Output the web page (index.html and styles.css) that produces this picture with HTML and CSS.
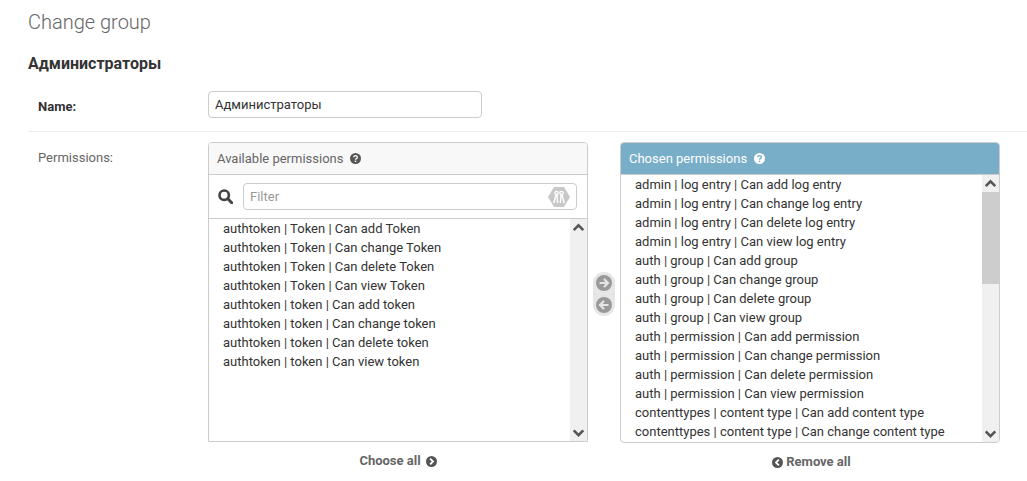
FILE: index.html
```html
<!DOCTYPE html>
<html lang="en">
<head>
    <meta charset="UTF-8">
    <title>Change group</title>
    <link rel="stylesheet" href="styles.css">
</head>
<body>
<div class="content">
    <h1>Change group</h1>
    <h2>Администраторы</h2>
    <!--name-->
    <div class="form-row name-row">
        <label class="required">Name:</label>
        <input class="text-input" type="text" value="Администраторы">
    </div>
    <!--permissions-->
    <div class="form-row perm-row">
        <label>Permissions:</label>
        <div class="selector">
            <div class="selector-side">
                <div class="box">
                    <div class="box-title">
                        Available permissions
                        <svg class="help" viewBox="0 0 16 16"><circle cx="8" cy="8" r="8" fill="currentColor"/><path d="M5.400 6.200a2.600 2.400 0 1 1 3.900 2.100c-.9.5-1.300.9-1.300 1.600" fill="none" stroke="#f8f8f8" stroke-width="2"/><rect x="6.900" y="11" width="2.200" height="2.200" fill="#f8f8f8"/></svg>
                    </div>
                    <div class="filter">
                        <svg class="search" viewBox="0 0 16 16"><circle cx="6.600" cy="6.600" r="5" fill="none" stroke="#444" stroke-width="2.800"/><path d="M10.400 10.400l4.200 4.200" stroke="#444" stroke-width="3.200" stroke-linecap="round"/></svg>
                        <div class="filter-input">
                            <span>Filter</span>
                            <svg class="keys" viewBox="0 0 22 20"><path d="M6 0h10l6 10-6 10H6L0 10z" fill="#c8c8c8"/><g fill="none" stroke="#fff" stroke-width="1.400"><circle cx="8.500" cy="6" r="1.600"/><circle cx="13.500" cy="6" r="1.600"/><path d="M8 8L5.800 16M9 8l.6 8M14 8l2.200 8M13 8l-.6 8"/></g></svg>
                        </div>
                    </div>
                    <div class="list-wrap left-list">
                        <ul class="list">
                            <li>authtoken | Token | Can add Token</li>
                            <li>authtoken | Token | Can change Token</li>
                            <li>authtoken | Token | Can delete Token</li>
                            <li>authtoken | Token | Can view Token</li>
                            <li>authtoken | token | Can add token</li>
                            <li>authtoken | token | Can change token</li>
                            <li>authtoken | token | Can delete token</li>
                            <li>authtoken | token | Can view token</li>
                        </ul>
                        <div class="scrollbar">
                            <svg class="arrow" viewBox="0 0 16 16"><path d="M3.500 10.500L8 6l4.500 4.500" fill="none" stroke="#555" stroke-width="2.400"/></svg>
                            <div class="track"></div>
                            <svg class="arrow" viewBox="0 0 16 16"><path d="M3.500 6L8 10.500 12.500 6" fill="none" stroke="#555" stroke-width="2.400"/></svg>
                        </div>
                    </div>
                </div>
                <a class="all-link">Choose all
                    <svg class="circle-icon" viewBox="0 0 16 16"><circle cx="8" cy="8" r="8" fill="#555"/><path d="M6 3.800L10.200 8 6 12.200" fill="none" stroke="#fff" stroke-width="2.600"/></svg>
                </a>
            </div>

            <div class="chooser">
                <div class="chooser-btn">
                    <svg viewBox="0 0 16 16"><circle cx="8" cy="8" r="8" fill="#999"/><path d="M3.500 8h8M8 4l4 4-4 4" fill="none" stroke="#e6e6e6" stroke-width="2.200"/></svg>
                    <svg viewBox="0 0 16 16"><circle cx="8" cy="8" r="8" fill="#999"/><path d="M12.500 8h-8M8 4L4 8l4 4" fill="none" stroke="#e6e6e6" stroke-width="2.200"/></svg>
                </div>
            </div>

            <div class="selector-side">
                <div class="box box-chosen">
                    <div class="box-title title-chosen">
                        Chosen permissions
                        <svg class="help" viewBox="0 0 16 16"><circle cx="8" cy="8" r="8" fill="currentColor"/><path d="M5.400 6.200a2.600 2.400 0 1 1 3.900 2.100c-.9.5-1.300.9-1.300 1.600" fill="none" stroke="#79aec8" stroke-width="2"/><rect x="6.900" y="11" width="2.200" height="2.200" fill="#79aec8"/></svg>
                    </div>
                    <div class="list-wrap right-list">
                        <ul class="list">
                            <li>admin | log entry | Can add log entry</li>
                            <li>admin | log entry | Can change log entry</li>
                            <li>admin | log entry | Can delete log entry</li>
                            <li>admin | log entry | Can view log entry</li>
                            <li>auth | group | Can add group</li>
                            <li>auth | group | Can change group</li>
                            <li>auth | group | Can delete group</li>
                            <li>auth | group | Can view group</li>
                            <li>auth | permission | Can add permission</li>
                            <li>auth | permission | Can change permission</li>
                            <li>auth | permission | Can delete permission</li>
                            <li>auth | permission | Can view permission</li>
                            <li>contenttypes | content type | Can add content type</li>
                            <li>contenttypes | content type | Can change content type</li>
                        </ul>
                        <div class="scrollbar">
                            <svg class="arrow" viewBox="0 0 16 16"><path d="M3.500 10.500L8 6l4.500 4.500" fill="none" stroke="#555" stroke-width="2.400"/></svg>
                            <div class="track"><div class="thumb"></div></div>
                            <svg class="arrow" viewBox="0 0 16 16"><path d="M3.500 6L8 10.500 12.500 6" fill="none" stroke="#555" stroke-width="2.400"/></svg>
                        </div>
                    </div>
                </div>
                <a class="all-link remove-link">
                    <svg class="circle-icon" viewBox="0 0 16 16"><circle cx="8" cy="8" r="8" fill="#555"/><path d="M10 3.800L5.800 8 10 12.200" fill="none" stroke="#fff" stroke-width="2.600"/></svg>
                    Remove all
                </a>
            </div>
        </div>
    </div>
</div>
</body>
</html>
```

FILE: styles.css
```css
* {
    padding: 0;
    margin: 0;
    list-style: none;
    box-sizing: border-box;
}

html, body {
    height: 481px;
    overflow: hidden;
    background: #fff;
}

body {
    font-family: Roboto, "Liberation Sans", sans-serif;
    font-size: 13px;
    color: #333;
}

.content {
    padding: 10px 0 0 28px;
}

h1 {
    font-size: 20px;
    font-weight: 300;
    line-height: 24px;
    color: #666;
}

h2 {
    margin-top: 18px;
    font-size: 16px;
    font-weight: 700;
    line-height: 24px;
    color: #333;
}

.form-row {
    display: flex;
    padding-left: 10px;
}

.form-row label {
    width: 170px;
    flex: none;
    color: #666;
}

.name-row {
    margin-top: 15px;
    height: 41px;
    border-bottom: 1px solid #eee;
}

.name-row label {
    padding-top: 8px;
    font-weight: 700;
    color: #333;
}

.text-input {
    width: 274px;
    height: 27px;
    padding: 0 6px;
    border: 1px solid #ccc;
    border-radius: 4px;
    font-family: inherit;
    font-size: 13px;
    color: #333;
}

.perm-row {
    padding-top: 10px;
}

.perm-row label {
    padding-top: 8px;
}

.selector {
    display: flex;
    width: 792px;
}

.selector-side {
    width: 380px;
    flex: none;
}

.box {
    height: 300px;
    border: 1px solid #ccc;
    border-radius: 4px 4px 0 0;
    display: flex;
    flex-direction: column;
    overflow: hidden;
}

.box-chosen {
    height: 301px;
    border-radius: 4px;
}

.box-title {
    height: 32px;
    flex: none;
    display: flex;
    align-items: center;
    padding-left: 8px;
    background: #f8f8f8;
    border-bottom: 1px solid #ccc;
    color: #666;
    font-size: 13px;
}

.title-chosen {
    background: #79aec8;
    color: #fff;
}

.help {
    width: 11px;
    height: 11px;
    margin-left: 7px;
    color: #555;
}

.title-chosen .help {
    color: #fff;
}

.filter {
    height: 44px;
    flex: none;
    display: flex;
    align-items: center;
    padding: 0 10px 0 9px;
    border-bottom: 1px solid #ccc;
}

.search {
    width: 15px;
    height: 15px;
    flex: none;
}

.filter-input {
    margin-left: 10px;
    flex: 1;
    height: 27px;
    border: 1px solid #ccc;
    border-radius: 4px;
    display: flex;
    align-items: center;
    justify-content: space-between;
    padding: 0 6px;
    color: #999;
}

.keys {
    width: 22px;
    height: 20px;
}

.list-wrap {
    flex: 1;
    display: flex;
    min-height: 0;
}

.list {
    flex: 1;
    overflow: hidden;
    padding-left: 14px;
    color: #333;
}

.list li {
    height: 19px;
    line-height: 19px;
    white-space: nowrap;
}

.scrollbar {
    width: 17px;
    flex: none;
    display: flex;
    flex-direction: column;
    background: #f0f0f0;
}

.arrow {
    width: 17px;
    height: 17px;
    flex: none;
}

.track {
    flex: 1;
}

.thumb {
    height: 92px;
    background: #cdcdcd;
}

.all-link {
    display: flex;
    align-items: center;
    justify-content: center;
    gap: 5px;
    margin-top: 11px;
    font-weight: 700;
    line-height: 16px;
    color: #666;
}

.remove-link {
    gap: 3px;
    padding-left: 3px;
}

.circle-icon {
    width: 11px;
    height: 11px;
}

.chooser {
    width: 32px;
    flex: none;
    display: flex;
    align-items: center;
    justify-content: center;
    height: 300px;
    padding-top: 4px;
}

.chooser-btn {
    width: 22px;
    height: 44px;
    border-radius: 11px;
    background: #e6e6e6;
    display: flex;
    flex-direction: column;
    align-items: center;
    gap: 6px;
    padding: 3px 0;
}

.chooser-btn svg {
    width: 16px;
    height: 16px;
}
```
